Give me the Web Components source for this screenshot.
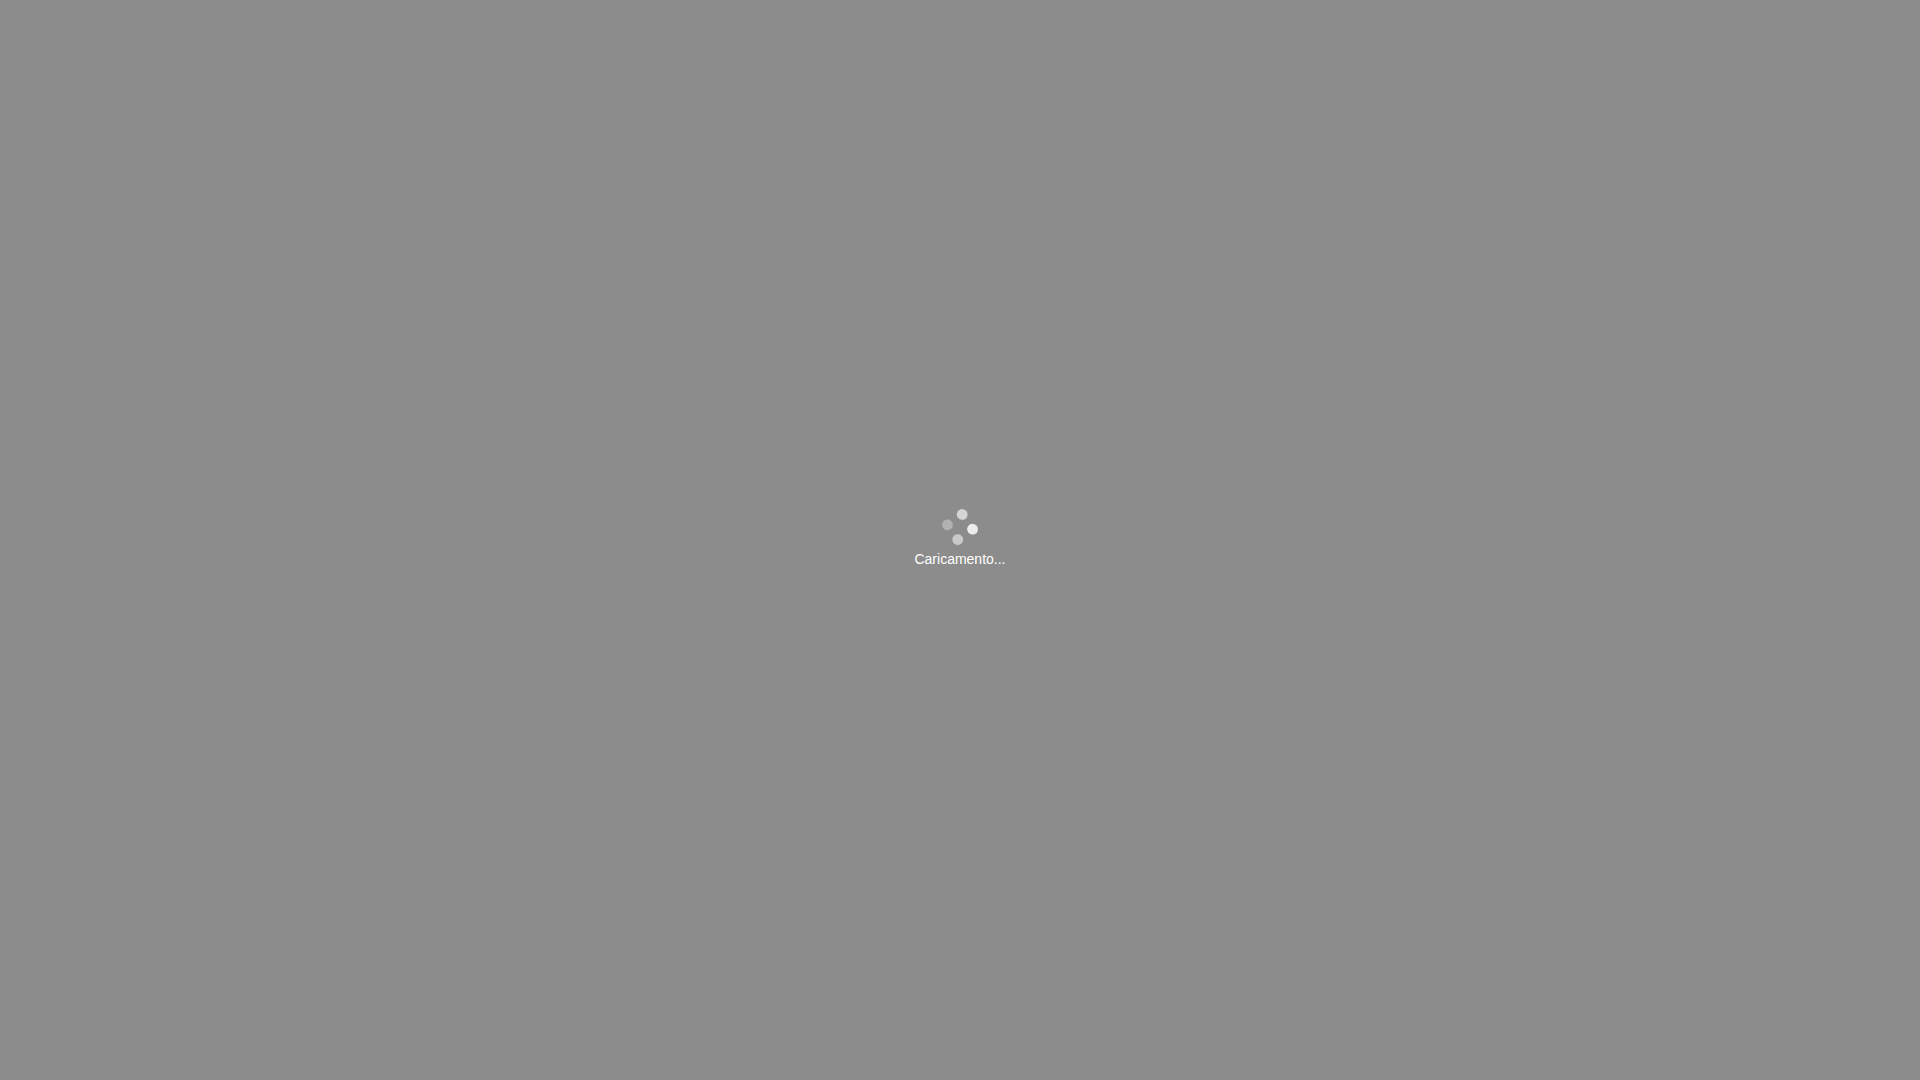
<!DOCTYPE html>
<html lang="it">
<head>
<meta charset="utf-8">
<title>Caricamento</title>
<style>
  body { margin: 0; background: #fff; font-family: "Liberation Sans", Arial, sans-serif; }
</style>
</head>
<body>
<loading-overlay>
  <dot-spinner></dot-spinner>
  <loading-label>Caricamento...</loading-label>
</loading-overlay>
<script>
  const define = (name, html) => customElements.define(name, class extends HTMLElement {
    constructor() {
      super();
      this.attachShadow({ mode: 'open' }).innerHTML = html;
    }
  });

  define('loading-overlay', `
    <style>
      :host {
        display: flex; flex-direction: column; align-items: center; justify-content: center;
        gap: 5px; min-height: 100vh; background: rgba(0, 0, 0, 0.45); color: #fff;
      }
    </style>
    <slot></slot>`);

  define('dot-spinner', `
    <style>
      :host { display: block; width: 32px; height: 32px; }
      svg { display: block; width: 100%; height: 100%; overflow: visible; }
    </style>
    <svg viewBox="-16 -16 32 32" fill="#fff" aria-hidden="true">
      <g transform="rotate(10)">
        <circle cx="0" cy="-12.73" r="5.4" opacity="0.63"/>
        <circle cx="12.73" cy="0" r="5.4" opacity="0.83"/>
        <circle cx="0" cy="12.73" r="5.4" opacity="0.53"/>
        <circle cx="-12.73" cy="0" r="5.4" opacity="0.33"/>
      </g>
    </svg>`);

  define('loading-label', `
    <style>
      :host { display: block; font-size: 14px; line-height: 22px; }
    </style>
    <div role="status"><slot></slot></div>`);
</script>
</body>
</html>
